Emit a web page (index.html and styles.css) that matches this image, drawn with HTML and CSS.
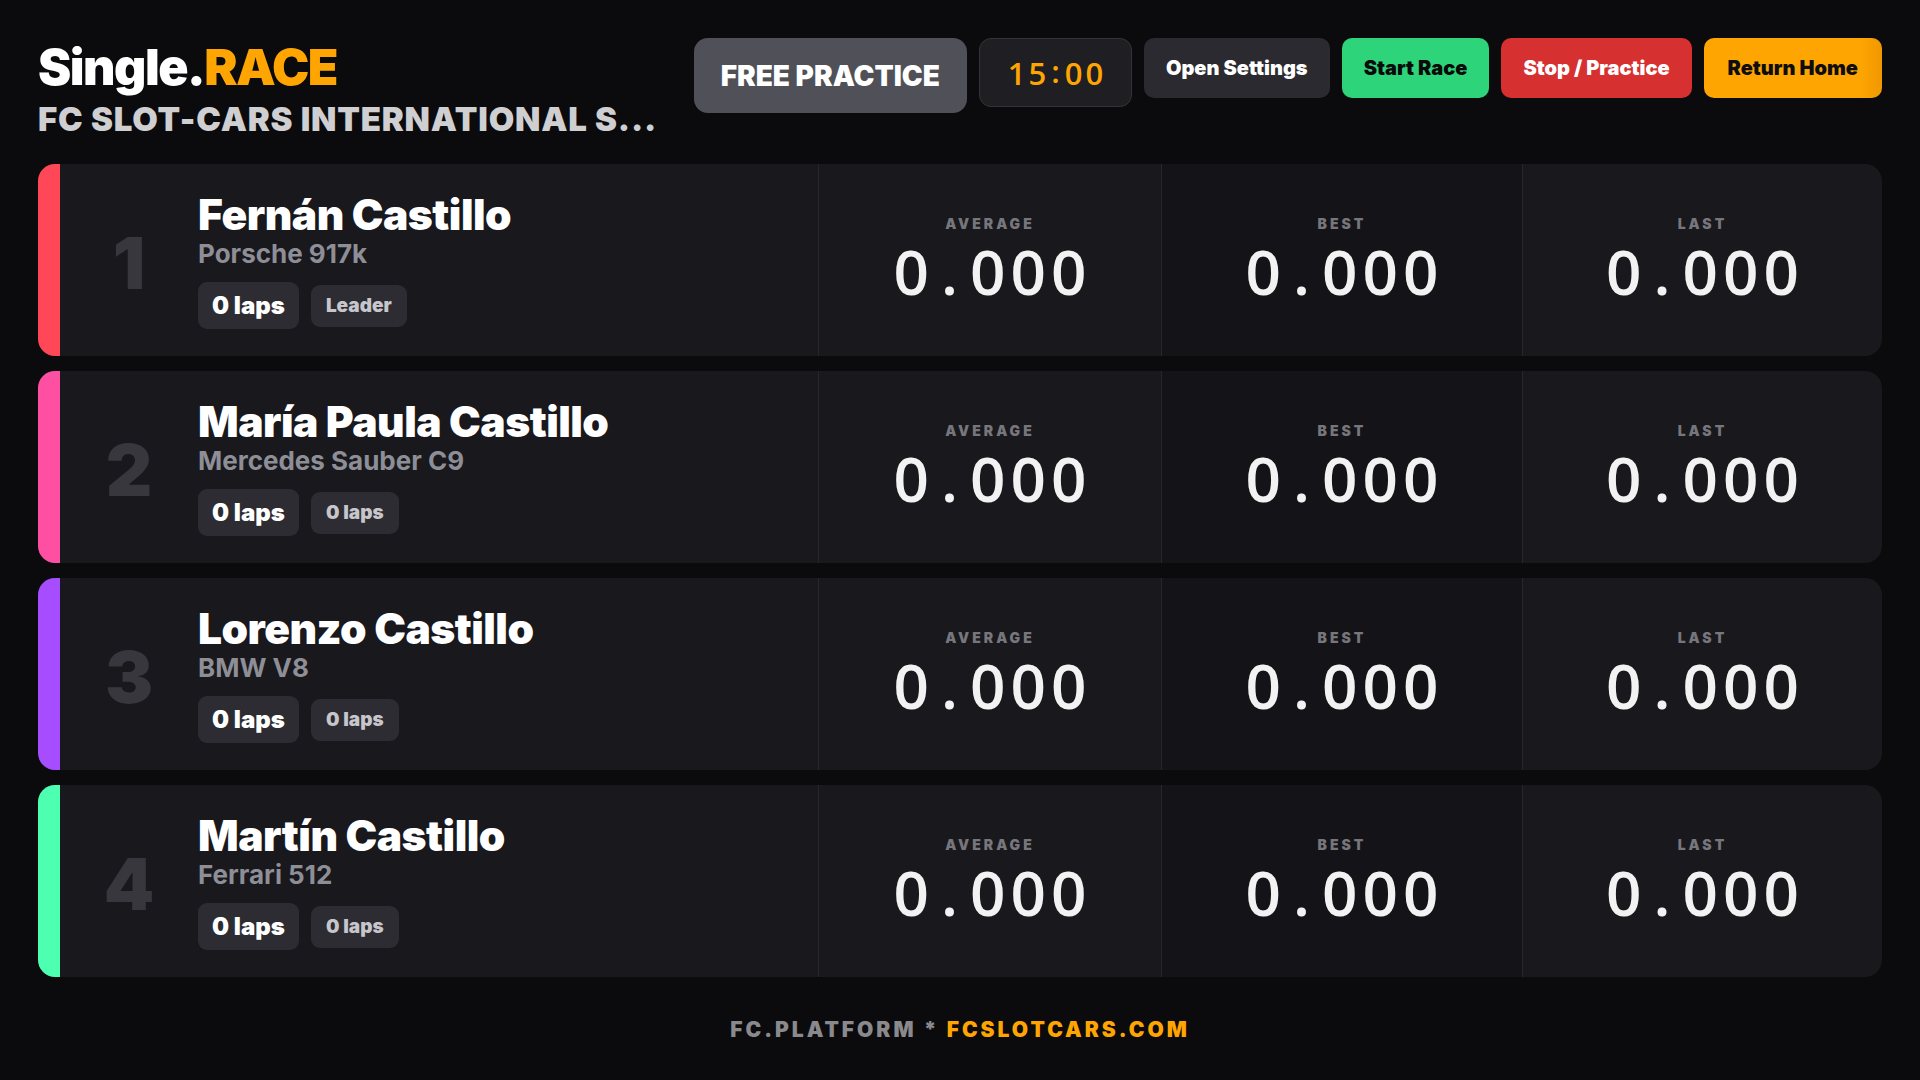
FILE: index.html
```html
<!DOCTYPE html>
<html lang="es">
<head>
<meta charset="utf-8">
<title>Single.RACE</title>
<link rel="stylesheet" href="styles.css">
</head>
<body>
<div class="page">
  <header class="top">
    <div class="brand">
      <h1 class="brand-title">Single.<span class="accent">RACE</span></h1>
      <div class="brand-sub">FC SLOT-CARS INTERNATIONAL S...</div>
    </div>
    <div class="controls">
      <div class="mode">FREE PRACTICE</div>
      <div class="timer">15<span class="sep">:</span>00</div>
      <button class="btn btn-dark">Open Settings</button>
      <button class="btn btn-green">Start Race</button>
      <button class="btn btn-red">Stop / Practice</button>
      <button class="btn btn-orange">Return Home</button>
    </div>
  </header>

  <main class="board">
    <div class="row">
      <div class="stripe stripe-red"></div>
      <div class="info">
        <div class="pos">1</div>
        <div class="details">
          <div class="name">Fernán Castillo</div>
          <div class="car">Porsche 917k</div>
          <div class="badges"><span class="badge badge-main">0 laps</span><span class="badge badge-sub">Leader</span></div>
        </div>
      </div>
      <div class="stat"><div class="stat-label">AVERAGE</div><div class="stat-value">0<span class="dot">.</span>000</div></div>
      <div class="stat stat-best"><div class="stat-label">BEST</div><div class="stat-value">0<span class="dot">.</span>000</div></div>
      <div class="stat"><div class="stat-label">LAST</div><div class="stat-value">0<span class="dot">.</span>000</div></div>
    </div>

    <div class="row">
      <div class="stripe stripe-pink"></div>
      <div class="info">
        <div class="pos">2</div>
        <div class="details">
          <div class="name">María Paula Castillo</div>
          <div class="car">Mercedes Sauber C9</div>
          <div class="badges"><span class="badge badge-main">0 laps</span><span class="badge badge-sub">0 laps</span></div>
        </div>
      </div>
      <div class="stat"><div class="stat-label">AVERAGE</div><div class="stat-value">0<span class="dot">.</span>000</div></div>
      <div class="stat stat-best"><div class="stat-label">BEST</div><div class="stat-value">0<span class="dot">.</span>000</div></div>
      <div class="stat"><div class="stat-label">LAST</div><div class="stat-value">0<span class="dot">.</span>000</div></div>
    </div>

    <div class="row">
      <div class="stripe stripe-purple"></div>
      <div class="info">
        <div class="pos">3</div>
        <div class="details">
          <div class="name">Lorenzo Castillo</div>
          <div class="car">BMW V8</div>
          <div class="badges"><span class="badge badge-main">0 laps</span><span class="badge badge-sub">0 laps</span></div>
        </div>
      </div>
      <div class="stat"><div class="stat-label">AVERAGE</div><div class="stat-value">0<span class="dot">.</span>000</div></div>
      <div class="stat stat-best"><div class="stat-label">BEST</div><div class="stat-value">0<span class="dot">.</span>000</div></div>
      <div class="stat"><div class="stat-label">LAST</div><div class="stat-value">0<span class="dot">.</span>000</div></div>
    </div>

    <div class="row">
      <div class="stripe stripe-mint"></div>
      <div class="info">
        <div class="pos">4</div>
        <div class="details">
          <div class="name">Martín Castillo</div>
          <div class="car">Ferrari 512</div>
          <div class="badges"><span class="badge badge-main">0 laps</span><span class="badge badge-sub">0 laps</span></div>
        </div>
      </div>
      <div class="stat"><div class="stat-label">AVERAGE</div><div class="stat-value">0<span class="dot">.</span>000</div></div>
      <div class="stat stat-best"><div class="stat-label">BEST</div><div class="stat-value">0<span class="dot">.</span>000</div></div>
      <div class="stat"><div class="stat-label">LAST</div><div class="stat-value">0<span class="dot">.</span>000</div></div>
    </div>
  </main>

  <footer class="foot">FC.PLATFORM * <span class="accent">FCSLOTCARS.COM</span></footer>
</div>
</body>
</html>
```

FILE: styles.css
```css
* { box-sizing: border-box; }

html, body {
  margin: 0;
  height: 100%;
  background: #0b0b0d;
}

body {
  font-family: Inter, "Open Sans", "DejaVu Sans", sans-serif;
  color: #ffffff;
}

.page {
  padding: 38px 38px 0 38px;
}

.accent { color: #ffa502; }

/* ---------- header ---------- */
.top {
  display: flex;
  align-items: flex-start;
  gap: 30px;
  height: 126px;
}

.brand {
  flex: 1;
  min-width: 0;
  padding-top: 4px;
}

.brand-title {
  margin: 0;
  font-size: 50px;
  font-weight: 900;
  line-height: 1;
  letter-spacing: -1.5px;
}

.brand-sub {
  margin-top: 11px;
  font-size: 33px;
  font-weight: 900;
  line-height: 1;
  letter-spacing: 0.8px;
  color: #cfcfd1;
  white-space: nowrap;
}

.controls {
  display: flex;
  align-items: flex-start;
  gap: 12px;
}

.mode {
  height: 75px;
  padding: 0 27px;
  display: flex;
  align-items: center;
  background: #505058;
  border-radius: 14px;
  font-size: 28px;
  font-weight: 900;
  white-space: nowrap;
}

.timer {
  width: 153px;
  height: 69px;
  display: flex;
  align-items: center;
  justify-content: center;
  padding-left: 3px;
  background: #1e1e23;
  border: 1px solid #33333a;
  border-radius: 12px;
  font-family: "Open Sans", sans-serif;
  font-size: 31px;
  font-weight: 600;
  letter-spacing: 3px;
  color: #ffa502;
}

.timer .sep {
  margin: 0 2px;
  position: relative;
  top: -2px;
}

.btn {
  height: 60px;
  padding: 0 22px;
  border: 0;
  border-radius: 10px;
  font-family: Inter, "Open Sans", sans-serif;
  font-size: 20px;
  font-weight: 900;
  white-space: nowrap;
  cursor: pointer;
}

.btn-dark { background: #2a2a30; color: #ffffff; }
.btn-green { background: #2ed47a; color: #0a0a0a; }
.btn-red { background: #d63031; color: #ffffff; }
.btn-orange {
  padding: 0 24px;
  background: linear-gradient(90deg, #ffa502 0%, #ffa502 88%, #ef9800 100%);
  color: #0e0e0e;
}

/* ---------- board ---------- */
.board {
  display: flex;
  flex-direction: column;
  gap: 15px;
}

.row {
  display: grid;
  grid-template-columns: 22px 758px 343px 361px 1fr;
  height: 192px;
  background: #18181d;
  border-radius: 17px;
  overflow: hidden;
}

.stripe-red { background: #ff4757; }
.stripe-pink { background: #ff4fa3; }
.stripe-purple { background: #a64dff; }
.stripe-mint { background: #4dffb0; }

.info {
  display: flex;
  align-items: center;
}

.pos {
  width: 138px;
  flex: none;
  text-align: center;
  font-size: 72px;
  font-weight: 900;
  color: #37373d;
  line-height: 1;
  padding-top: 6px;
}

.details {
  display: flex;
  flex-direction: column;
}

.name {
  font-size: 42.5px;
  font-weight: 900;
  line-height: 1.12;
  letter-spacing: -0.5px;
}

.car {
  font-size: 26px;
  font-weight: 700;
  line-height: 1.2;
  color: #8e8e96;
}

.badges {
  display: flex;
  align-items: center;
  gap: 12px;
  margin-top: 13px;
}

.badge {
  display: flex;
  align-items: center;
  background: #2c2c32;
  border-radius: 9px;
  font-weight: 900;
}

.badge-main {
  height: 47px;
  padding: 0 14px;
  font-size: 24px;
  color: #ffffff;
}

.badge-sub {
  height: 42px;
  padding: 0 15px;
  font-size: 19px;
  color: #c6c6cb;
}

.stat {
  display: flex;
  flex-direction: column;
  align-items: center;
  justify-content: center;
  border-left: 1px solid #26262c;
  padding-top: 2px;
}

.stat-best { background: #141418; }

.stat-label {
  font-size: 14px;
  font-weight: 900;
  letter-spacing: 3px;
  color: #76767c;
  line-height: 1;
}

.stat-value {
  margin-top: 8px;
  padding-left: 5px;
  font-family: "Open Sans", sans-serif;
  font-size: 62px;
  font-weight: 600;
  line-height: 1.05;
  letter-spacing: 5px;
  color: #f2f2f2;
}

.stat-value .dot {
  margin: 0 7px;
}

/* ---------- footer ---------- */
.foot {
  margin-top: 42px;
  text-align: center;
  font-size: 21px;
  font-weight: 900;
  line-height: 1;
  letter-spacing: 3px;
  color: #8a8a8e;
}
```
